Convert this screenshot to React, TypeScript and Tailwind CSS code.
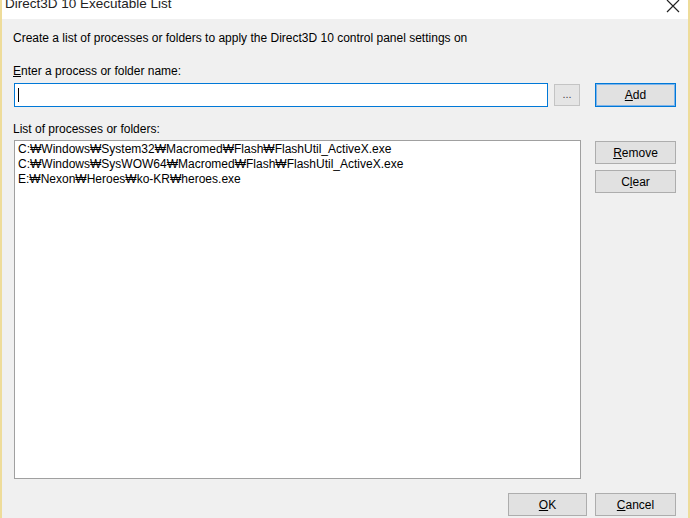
import React from "react";

const font = { fontFamily: '"Liberation Sans", Arial, sans-serif' };

function Btn({ children, className = "" }: { children: React.ReactNode; className?: string }) {
  return (
    <div
      className={`flex items-center justify-center bg-[#e1e1e1] border border-[#adadad] text-[12px] text-black ${className}`}
    >
      {children}
    </div>
  );
}

export default function App() {
  const W = "\u20A9";
  const items = [
    `C:${W}Windows${W}System32${W}Macromed${W}Flash${W}FlashUtil_ActiveX.exe`,
    `C:${W}Windows${W}SysWOW64${W}Macromed${W}Flash${W}FlashUtil_ActiveX.exe`,
    `E:${W}Nexon${W}Heroes${W}ko-KR${W}heroes.exe`,
  ];
  return (
    <div
      style={font}
      className="w-[690px] h-[518px] overflow-hidden flex flex-col bg-[#f0f0f0] border-l-2 border-r-2 border-[#eedc9a] text-black"
    >
      <div className="h-[19px] bg-white flex items-end justify-between overflow-hidden shrink-0">
        <div className="text-[13.5px] leading-[16px] pl-[3px] mb-[7px] text-[#222]">Direct3D 10 Executable List</div>
        <svg width="14" height="14" viewBox="0 0 14 14" className="mr-[8px] mb-[6px]">
          <path d="M1 1 L13 13 M13 1 L1 13" stroke="#222" strokeWidth="1.2" />
        </svg>
      </div>
      <div className="flex flex-col pl-[12px] pr-[12px]">
        <div className="mt-[11px] text-[12px] leading-[16px] -ml-[1px]">
          Create a list of processes or folders to apply the Direct3D 10 control panel settings on
        </div>
        <div className="mt-[17px] text-[12px] leading-[16px] -ml-[1px]">
          <span className="underline">E</span>nter a process or folder name:
        </div>
        <div className="mt-[4px] flex items-center h-[24px]">
          <div className="w-[534px] h-[24px] bg-white border border-[#0078d7] flex items-center pl-[3px]">
            <div className="w-[1px] h-[14px] bg-black" />
          </div>
          <Btn className="ml-[6px] w-[26px] h-[22px] bg-[#e5e5e5] border-[#c4c4c4]">
            <span className="text-[11px] -mt-[2px] text-[#444]">...</span>
          </Btn>
          <div className="ml-[15px] w-[81px] h-[24px] flex items-center justify-center bg-[#e1e1e1] border border-[#0078d7] shadow-[inset_0_0_0_1px_#7eb4ea] text-[12px]">
            <span className="underline">A</span>dd
          </div>
        </div>
        <div className="mt-[14px] text-[12px] leading-[16px] -ml-[1px]">List of processes or folders:</div>
        <div className="mt-[3px] flex items-start">
          <div className="w-[567px] h-[339px] bg-white border border-[#a0a0a0] pl-[3px] pt-[1px] text-[12px] leading-[15px]">
            {items.map((t) => (
              <div key={t}>{t}</div>
            ))}
          </div>
          <div className="ml-[14px] flex flex-col gap-[6px] pt-[1px]">
            <Btn className="w-[81px] h-[23px]">
              <span className="underline">R</span>emove
            </Btn>
            <Btn className="w-[81px] h-[23px]">
              C<span className="underline">l</span>ear
            </Btn>
          </div>
        </div>
        <div className="mt-[14px] flex justify-end gap-[8px]">
          <Btn className="w-[79px] h-[23px]">
            <span className="underline">O</span>K
          </Btn>
          <Btn className="w-[81px] h-[23px]">
            <span className="underline">C</span>ancel
          </Btn>
        </div>
      </div>
    </div>
  );
}
